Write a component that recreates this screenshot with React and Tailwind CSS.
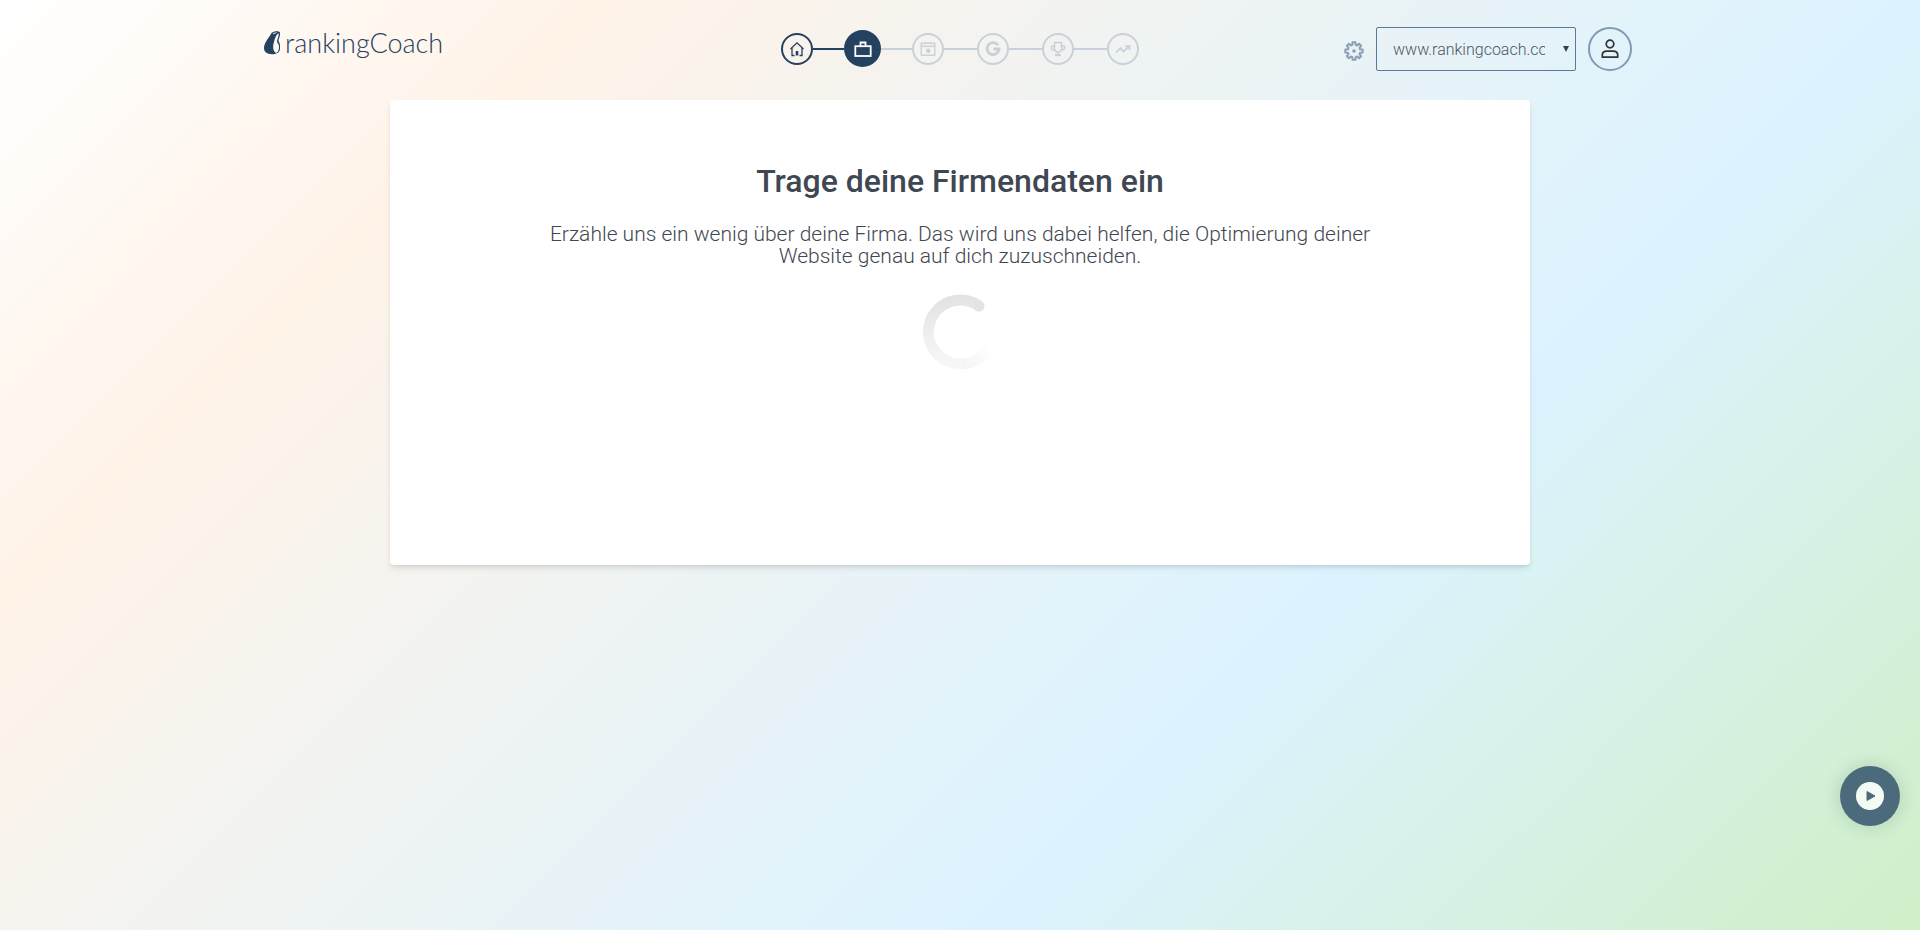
import React from "react";

function Logo() {
  return (
    <a href="#" aria-label="rankingCoach" className="flex h-8 items-center gap-[5px] text-[#24425f]">
      <svg viewBox="0 0 16 24" className="h-6 w-4" fill="none">
        <path d="M7.500 2C10 0 15 -.3 16 1.500C16.300 5 14.700 8 14.500 10C16 12 16.300 15 16 18C15.500 22 12 23.200 8 23.200C3 23.200 0 21 0 17C0 12 4 8 7.500 2Z" fill="currentColor" />
        <path d="M14.800 2.200C12.300 3 11 7 10 11C8.800 14 8.500 20 12 22C15 21 15.300 17 14.900 14.500C14.500 12 12.600 11.500 13 10C13.300 8 15 5 14.800 2.200Z" fill="#fdf6f3" />
        <path d="M9 2.800L12.500 1.600" stroke="#fdf6f3" strokeWidth="0.900" />
      </svg>
      <span className="font-['Lato',sans-serif] text-[27px] leading-8 font-light">rankingCoach</span>
    </a>
  );
}

const icons = {
  home: (
    <g>
      <path d="M1.500 8L8 1.800L14.500 8M3 7V14.500H5.500M13 7V14.500H10.500" strokeWidth="1.300" />
      <path d="M8 14.500V10" strokeWidth="2.600" />
    </g>
  ),
  company: (
    <g strokeWidth="1.800">
      <rect x="0.300" y="5.200" width="15.400" height="9.800" />
      <path d="M5.500 5V1.500H10.500V5" />
    </g>
  ),
  website: (
    <g strokeWidth="1.400">
      <rect x="1.200" y="2.200" width="13.600" height="12" rx="0.500" />
      <path d="M1 5.200H15" />
      <circle cx="8.300" cy="9.800" r="2.200" fill="currentColor" stroke="none" />
    </g>
  ),
  google: <path d="M13 4.200A6 6 0 1 0 14 8H8.500" strokeWidth="2.800" />,
  trophy: (
    <g strokeWidth="1.500">
      <path d="M4.500 1.500H11.500V9L9.500 11H6.500L4.500 9ZM4.500 5.200H1.500V8L4.500 9.500M11.500 5.200H14.500V8L11.500 9.500M8 11V14" />
      <path d="M5 14.200H11" strokeWidth="2" />
    </g>
  ),
  trend: <path d="M1 11.500L5.500 7L8.500 10.500L14 5.500M10 5H14.500V9" strokeWidth="1.700" />,
};

const steps = [
  { id: "home", label: "Start", state: "done" },
  { id: "company", label: "Firmendaten", state: "current" },
  { id: "website", label: "Website", state: "open" },
  { id: "google", label: "Google", state: "open" },
  { id: "trophy", label: "Wettbewerb", state: "open" },
  { id: "trend", label: "Ranking", state: "open" },
];

const stepStyles = {
  done: "size-8 border-2 border-[#24425f] text-[#24425f]",
  current: "size-[37px] bg-[#24425f] text-white",
  open: "size-8 border-2 border-[#c8d1db] text-[#c8d1db]",
};

const lineStyles = [
  "",
  "w-[31px] bg-[#24425f]",
  "w-[31px] bg-[#c8d1db]",
  "w-[33px] bg-[#c8d1db]",
  "w-[33px] bg-[#c8d1db]",
  "w-[33px] bg-[#c8d1db]",
];

function Steps() {
  return (
    <ol className="flex items-center">
      {steps.map((step, i) => (
        <li key={step.id} className="flex items-center">
          {i > 0 && <span className={`h-0.5 ${lineStyles[i]}`} />}
          <button aria-label={step.label} className={`flex items-center justify-center rounded-full ${stepStyles[step.state]}`}>
            <svg viewBox="0 0 16 16" fill="none" stroke="currentColor" className="size-4 overflow-visible">
              {icons[step.id]}
            </svg>
          </button>
        </li>
      ))}
    </ol>
  );
}

function gearPath() {
  const points = [];
  for (let i = 0; i < 8; i++) {
    [[-0.27, 6.3], [-0.17, 8.8], [0.17, 8.8], [0.27, 6.3]].forEach(([da, r]) => {
      const a = (i * Math.PI) / 4 + da;
      points.push(`${(10 + r * Math.sin(a)).toFixed(2)} ${(10 - r * Math.cos(a)).toFixed(2)}`);
    });
  }
  return `M${points.join("L")}Z`;
}

function Account() {
  return (
    <div className="flex items-center justify-end pt-[3px] pr-6">
      <button aria-label="Einstellungen" className="mr-3 pt-1 text-[#8a9fb4]">
        <svg viewBox="0 0 20 20" className="size-5" fill="none" stroke="currentColor" strokeWidth="2" strokeLinejoin="round">
          <path d={gearPath()} />
          <circle cx="10" cy="10" r="1.800" fill="currentColor" stroke="none" />
        </svg>
      </button>
      <div className="relative mr-3">
        <select
          aria-label="Website"
          className="block h-11 w-50 appearance-none rounded-xs border border-[#5b7a97] bg-transparent pt-0.5 pr-[30px] pl-4 text-base font-light text-[#4d5661]"
        >
          <option>www.rankingcoach.com</option>
        </select>
        <svg viewBox="0 0 6 6" className="pointer-events-none absolute top-[19px] right-[7px] size-1.5" fill="#3a3f47">
          <path d="M0 0H6L3 6Z" />
        </svg>
      </div>
      <button aria-label="Profil" className="flex size-11 items-center justify-center rounded-full border-2 border-[#8299b3] text-[#333]">
        <svg viewBox="0 0 20 20" className="size-5" fill="none" stroke="currentColor" strokeWidth="1.700">
          <circle cx="10" cy="5" r="3.800" />
          <path d="M2.300 18.200V16C2.300 13.500 4.500 12.200 7 12.200H13C15.500 12.200 17.700 13.500 17.700 16V18.200Z" strokeLinejoin="round" />
        </svg>
      </button>
    </div>
  );
}

function Spinner() {
  return (
    <svg role="img" aria-label="Wird geladen" viewBox="0 0 76 76" className="mt-[27px] size-[76px]" fill="none">
      <defs>
        <linearGradient id="fade" x1="38" y1="0" x2="46" y2="76" gradientUnits="userSpaceOnUse">
          <stop offset="0" stopColor="#e2e2e2" />
          <stop offset="0.500" stopColor="#efefef" />
          <stop offset="0.850" stopColor="#f6f6f6" />
          <stop offset="1" stopColor="#f8f8f8" />
        </linearGradient>
        <linearGradient id="tail" x1="40" y1="66" x2="68" y2="52" gradientUnits="userSpaceOnUse">
          <stop offset="0" stopColor="#f5f5f5" />
          <stop offset="1" stopColor="#ffffff" />
        </linearGradient>
      </defs>
      <path d="M40 70A32 32 0 0 0 68 51" stroke="url(#tail)" strokeWidth="11" />
      <path d="M57 12A32 32 0 1 0 40 70" stroke="url(#fade)" strokeWidth="11" />
      <circle cx="57" cy="12" r="5.500" fill="#e3e3e3" />
    </svg>
  );
}

export default function App() {
  return (
    <div className="min-h-screen bg-[linear-gradient(135deg,#ffffff_0%,#fff3e8_21%,#dcf3ff_67%,#cff0c8_100%)] font-['Roboto',sans-serif]">
      <header className="mx-auto grid w-full max-w-[1392px] grid-cols-[1fr_auto_1fr] items-start pt-6">
        <div className="flex pt-[3px]">
          <Logo />
        </div>
        <div className="pt-1.5">
          <Steps />
        </div>
        <Account />
      </header>
      <main className="mx-auto mt-[29px] flex min-h-[465px] w-full max-w-[1140px] flex-col items-center rounded bg-white px-6 pt-[63px] shadow-md">
        <h1 className="text-center text-[32px] leading-9 font-medium text-[#3f4752]">Trage deine Firmendaten ein</h1>
        <p className="mt-6 max-w-[830px] text-center text-[21px] leading-[22px] font-light text-[#3f4752]">
          Erzähle uns ein wenig über deine Firma. Das wird uns dabei helfen, die Optimierung deiner Website genau auf dich zuzuschneiden.
        </p>
        <Spinner />
      </main>
      <button
        aria-label="Video abspielen"
        className="fixed right-5 bottom-[104px] flex size-15 items-center justify-center rounded-full bg-[#4b6b7c] shadow-[0_0_20px_rgba(0,0,0,0.15)]"
      >
        <svg viewBox="0 0 28 28" className="size-7">
          <circle cx="14" cy="14" r="14" fill="#f4fbf5" />
          <path d="M11 9.500V18.500L19 14Z" fill="#4b6b7c" stroke="#4b6b7c" strokeLinejoin="round" />
        </svg>
      </button>
    </div>
  );
}
